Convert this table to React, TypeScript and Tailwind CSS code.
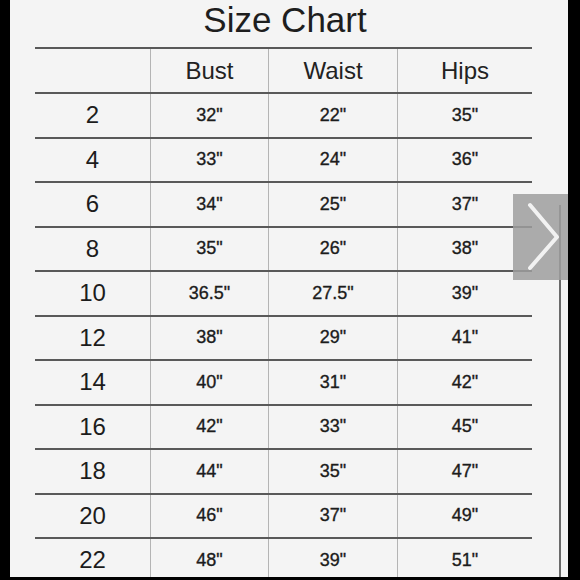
import React from 'react';

const rows: [string, string, string, string][] = [
  ['2', '32"', '22"', '35"'],
  ['4', '33"', '24"', '36"'],
  ['6', '34"', '25"', '37"'],
  ['8', '35"', '26"', '38"'],
  ['10', '36.5"', '27.5"', '39"'],
  ['12', '38"', '29"', '41"'],
  ['14', '40"', '31"', '42"'],
  ['16', '42"', '33"', '45"'],
  ['18', '44"', '35"', '47"'],
  ['20', '46"', '37"', '49"'],
  ['22', '48"', '39"', '51"'],
];

const cols = 'grid grid-cols-[115px_118px_129px_135px]';
const cell = 'flex items-center justify-center border-l border-[#b4b4b4] first:border-l-0';
const val = 'text-[18px] [-webkit-text-stroke:0.35px_#1c1c1c]';

const App: React.FC = () => {
  return (
    <div className="flex w-[580px] h-[580px] bg-black overflow-hidden" style={{ fontFamily: '"Liberation Sans", Arial, sans-serif' }}>
      <div className="w-[10px] shrink-0" />
      <div className="relative w-[558px] h-[577px] bg-[#f4f4f4] overflow-hidden">
        {/* title */}
        <div className="h-[47px] w-[550px] flex items-center justify-center text-[35px] text-[#1e1e1e] leading-none pb-[8px]">
          Size Chart
        </div>

        {/* table */}
        <div className="ml-[25px] w-[497px]">
          <div className={`${cols} h-[45px] border-t-2 border-[#595959] text-[24px] text-[#222]`}>
            <div className={cell} />
            <div className={cell}>Bust</div>
            <div className={cell}>Waist</div>
            <div className={cell}>Hips</div>
          </div>
          {rows.map(([size, bust, waist, hips]) => (
            <div key={size} className={`${cols} h-[44.5px] border-t-2 border-[#595959] text-[#1c1c1c]`}>
              <div className={`${cell} text-[24px]`}>{size}</div>
              <div className={`${cell} ${val}`}>{bust}</div>
              <div className={`${cell} ${val}`}>{waist}</div>
              <div className={`${cell} ${val}`}>{hips}</div>
            </div>
          ))}
        </div>

        {/* right edge line */}
        <div className="absolute left-[549px] top-[205px] bottom-0 w-[2px] bg-[#6a6a6a]" />

        {/* next arrow */}
        <div className="absolute left-[503px] top-[194px] w-[55px] h-[86px] bg-[#9d9d9d]/85 flex items-center justify-center">
          <svg width="55" height="86" viewBox="0 0 55 86">
            <polyline points="17,11 44,43 17,74" fill="none" stroke="#f2f2f2" strokeWidth="4" strokeLinecap="round" strokeLinejoin="round" />
          </svg>
        </div>
      </div>
    </div>
  );
};

export default App;
